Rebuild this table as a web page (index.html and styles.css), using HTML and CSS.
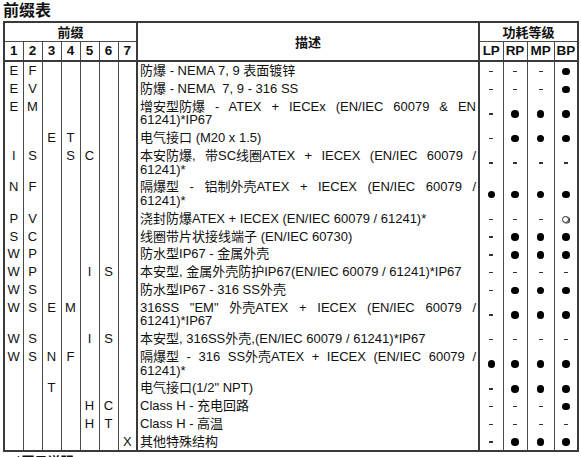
FILE: index.html
```html
<!DOCTYPE html>
<html lang="zh">
<head>
<meta charset="utf-8">
<title>前缀表</title>
<link rel="stylesheet" href="styles.css">
</head>
<body>
<div class="page">
  <h1 class="title">前缀表</h1>
  <table class="ptable">
    <colgroup>
      <col class="c-p"><col class="c-p"><col class="c-p"><col class="c-p"><col class="c-p"><col class="c-p"><col class="c-p">
      <col class="c-d">
      <col class="c-m"><col class="c-m"><col class="c-m3"><col class="c-m">
    </colgroup>
    <thead>
      <tr class="h1">
        <th colspan="7" class="grp sep-r">前缀</th>
        <th rowspan="2" class="desc-h sep-r">描述</th>
        <th colspan="4" class="grp">功耗等级</th>
      </tr>
      <tr class="h2">
        <th>1</th><th>2</th><th>3</th><th>4</th><th>5</th><th>6</th><th class="sep-r">7</th>
        <th>LP</th><th>RP</th><th>MP</th><th>BP</th>
      </tr>
    </thead>
    <tbody>
      <tr><td class="p">E</td><td class="p">F</td><td class="p"></td><td class="p"></td><td class="p"></td><td class="p"></td><td class="p sep-r"></td>
        <td class="d sep-r">防爆 - NEMA 7, 9 表面镀锌</td>
        <td class="m"><i class="dash"></i></td><td class="m"><i class="dash"></i></td><td class="m"><i class="dash"></i></td><td class="m"><i class="dot"></i></td></tr>
      <tr><td class="p">E</td><td class="p">V</td><td class="p"></td><td class="p"></td><td class="p"></td><td class="p"></td><td class="p sep-r"></td>
        <td class="d sep-r">防爆 - NEMA&nbsp; 7, 9 - 316 SS</td>
        <td class="m"><i class="dash"></i></td><td class="m"><i class="dash"></i></td><td class="m"><i class="dash"></i></td><td class="m"><i class="dot"></i></td></tr>
      <tr><td class="p">E</td><td class="p">M</td><td class="p"></td><td class="p"></td><td class="p"></td><td class="p"></td><td class="p sep-r"></td>
        <td class="d sep-r"><span class="jl"><span class="w">增安型防爆</span> - ATEX + IECEx (EN/IEC 60079 &amp; EN</span><span class="ln">61241)*IP67</span></td>
        <td class="m"><i class="dash"></i></td><td class="m"><i class="dot"></i></td><td class="m"><i class="dot"></i></td><td class="m"><i class="dot"></i></td></tr>
      <tr><td class="p"></td><td class="p"></td><td class="p">E</td><td class="p">T</td><td class="p"></td><td class="p"></td><td class="p sep-r"></td>
        <td class="d sep-r">电气接口 (M20 x 1.5)</td>
        <td class="m"><i class="dash"></i></td><td class="m"><i class="dot"></i></td><td class="m"><i class="dot"></i></td><td class="m"><i class="dot"></i></td></tr>
      <tr><td class="p">I</td><td class="p">S</td><td class="p"></td><td class="p">S</td><td class="p">C</td><td class="p"></td><td class="p sep-r"></td>
        <td class="d sep-r"><span class="jl"><span class="w">本安防爆,</span> <span class="w">带SC线圈ATEX</span> + IECEX (EN/IEC 60079 /</span><span class="ln">61241)*</span></td>
        <td class="m"><i class="dash"></i></td><td class="m"><i class="dash"></i></td><td class="m"><i class="dash"></i></td><td class="m"><i class="dash"></i></td></tr>
      <tr><td class="p">N</td><td class="p">F</td><td class="p"></td><td class="p"></td><td class="p"></td><td class="p"></td><td class="p sep-r"></td>
        <td class="d sep-r"><span class="jl"><span class="w">隔爆型</span> - <span class="w">铝制外壳ATEX</span> + IECEX (EN/IEC 60079 /</span><span class="ln">61241)*</span></td>
        <td class="m"><i class="dot"></i></td><td class="m"><i class="dot"></i></td><td class="m"><i class="dot"></i></td><td class="m"><i class="dot"></i></td></tr>
      <tr><td class="p">P</td><td class="p">V</td><td class="p"></td><td class="p"></td><td class="p"></td><td class="p"></td><td class="p sep-r"></td>
        <td class="d sep-r">浇封防爆ATEX + IECEX (EN/IEC 60079 / 61241)*</td>
        <td class="m"><i class="dash"></i></td><td class="m"><i class="dash"></i></td><td class="m"><i class="dash"></i></td><td class="m"><i class="ring"></i></td></tr>
      <tr><td class="p">S</td><td class="p">C</td><td class="p"></td><td class="p"></td><td class="p"></td><td class="p"></td><td class="p sep-r"></td>
        <td class="d sep-r">线圈带片状接线端子 (EN/IEC 60730)</td>
        <td class="m"><i class="dash"></i></td><td class="m"><i class="dot"></i></td><td class="m"><i class="dot"></i></td><td class="m"><i class="dot"></i></td></tr>
      <tr><td class="p">W</td><td class="p">P</td><td class="p"></td><td class="p"></td><td class="p"></td><td class="p"></td><td class="p sep-r"></td>
        <td class="d sep-r">防水型IP67 - 金属外壳</td>
        <td class="m"><i class="dash"></i></td><td class="m"><i class="dot"></i></td><td class="m"><i class="dot"></i></td><td class="m"><i class="dot"></i></td></tr>
      <tr><td class="p">W</td><td class="p">P</td><td class="p"></td><td class="p"></td><td class="p">I</td><td class="p">S</td><td class="p sep-r"></td>
        <td class="d sep-r">本安型, 金属外壳防护IP67(EN/IEC 60079 / 61241)*IP67</td>
        <td class="m"><i class="dash"></i></td><td class="m"><i class="dash"></i></td><td class="m"><i class="dash"></i></td><td class="m"><i class="dash"></i></td></tr>
      <tr><td class="p">W</td><td class="p">S</td><td class="p"></td><td class="p"></td><td class="p"></td><td class="p"></td><td class="p sep-r"></td>
        <td class="d sep-r">防水型IP67 - 316 SS外壳</td>
        <td class="m"><i class="dash"></i></td><td class="m"><i class="dot"></i></td><td class="m"><i class="dot"></i></td><td class="m"><i class="dot"></i></td></tr>
      <tr><td class="p">W</td><td class="p">S</td><td class="p">E</td><td class="p">M</td><td class="p"></td><td class="p"></td><td class="p sep-r"></td>
        <td class="d sep-r"><span class="jl">316SS "EM" <span class="w">外壳ATEX</span> + IECEX (EN/IEC 60079 /</span><span class="ln">61241)*IP67</span></td>
        <td class="m"><i class="dash"></i></td><td class="m"><i class="dot"></i></td><td class="m"><i class="dot"></i></td><td class="m"><i class="dot"></i></td></tr>
      <tr><td class="p">W</td><td class="p">S</td><td class="p"></td><td class="p"></td><td class="p">I</td><td class="p">S</td><td class="p sep-r"></td>
        <td class="d sep-r">本安型, 316SS外壳,(EN/IEC 60079 / 61241)*IP67</td>
        <td class="m"><i class="dash"></i></td><td class="m"><i class="dash"></i></td><td class="m"><i class="dash"></i></td><td class="m"><i class="dash"></i></td></tr>
      <tr><td class="p">W</td><td class="p">S</td><td class="p">N</td><td class="p">F</td><td class="p"></td><td class="p"></td><td class="p sep-r"></td>
        <td class="d sep-r"><span class="jl"><span class="w">隔爆型</span> - 316 <span class="w">SS外壳ATEX</span> + IECEX (EN/IEC 60079 /</span><span class="ln">61241)*</span></td>
        <td class="m"><i class="dot"></i></td><td class="m"><i class="dot"></i></td><td class="m"><i class="dot"></i></td><td class="m"><i class="dot"></i></td></tr>
      <tr><td class="p"></td><td class="p"></td><td class="p">T</td><td class="p"></td><td class="p"></td><td class="p"></td><td class="p sep-r"></td>
        <td class="d sep-r">电气接口(1/2" NPT)</td>
        <td class="m"><i class="dash"></i></td><td class="m"><i class="dot"></i></td><td class="m"><i class="dot"></i></td><td class="m"><i class="dot"></i></td></tr>
      <tr><td class="p"></td><td class="p"></td><td class="p"></td><td class="p"></td><td class="p">H</td><td class="p">C</td><td class="p sep-r"></td>
        <td class="d sep-r">Class H - 充电回路</td>
        <td class="m"><i class="dash"></i></td><td class="m"><i class="dash"></i></td><td class="m"><i class="dash"></i></td><td class="m"><i class="dot"></i></td></tr>
      <tr><td class="p"></td><td class="p"></td><td class="p"></td><td class="p"></td><td class="p">H</td><td class="p">T</td><td class="p sep-r"></td>
        <td class="d sep-r">Class H - 高温</td>
        <td class="m"><i class="dash"></i></td><td class="m"><i class="dash"></i></td><td class="m"><i class="dash"></i></td><td class="m"><i class="dash"></i></td></tr>
      <tr><td class="p"></td><td class="p"></td><td class="p"></td><td class="p"></td><td class="p"></td><td class="p"></td><td class="p sep-r">X</td>
        <td class="d sep-r">其他特殊结构</td>
        <td class="m"><i class="dash"></i></td><td class="m"><i class="dot"></i></td><td class="m"><i class="dot"></i></td><td class="m"><i class="dot"></i></td></tr>
    </tbody>
  </table>
  <p class="note">*图示说明</p>
</div>
</body>
</html>
```

FILE: styles.css
```css
html, body {
  margin: 0;
  padding: 0;
  background: #ffffff;
}

body {
  font-family: "Liberation Sans", "Noto Sans CJK SC", sans-serif;
  color: #111111;
}

.page {
  padding: 0 3px;
}

.title {
  margin: 0;
  padding: 0;
  font-family: "Noto Sans CJK SC", sans-serif;
  font-size: 16px;
  font-weight: 700;
  line-height: 18px;
  height: 21px;
}

.ptable {
  border-collapse: collapse;
  table-layout: fixed;
  width: 575px;
  border: 2px solid #3a3a3a;
  font-size: 13px;
}

.c-p { width: 19px; }
.c-d { width: 342px; }
.c-m { width: 24px; }
.c-m3 { width: 27px; }

.ptable th {
  font-weight: 700;
  font-size: 13.5px;
  line-height: 14px;
  padding: 2px 0;
  text-align: center;
  border: 1px solid #4a4a4a;
  color: #111;
}

.ptable thead .h1 th {
  height: 14px;
  font-family: "Noto Sans CJK SC", sans-serif;
  font-size: 13px;
}

.ptable thead .h2 th {
  border-bottom: 2px solid #3a3a3a;
}

.ptable th.desc-h {
  font-family: "Noto Sans CJK SC", sans-serif;
  font-size: 13px;
  border-bottom: 2px solid #3a3a3a;
}

.ptable td {
  padding: 2px 0;
  line-height: 13.75px;
  border-left: 1px solid #4a4a4a;
  border-right: 1px solid #4a4a4a;
  border-top: 0;
  border-bottom: 0;
}

.ptable .sep-r {
  border-right: 2px solid #3a3a3a;
}

.ptable td.p {
  text-align: center;
  vertical-align: top;
}

.ptable td.d {
  padding-left: 2px;
  padding-right: 2px;
  vertical-align: top;
}

.jl {
  display: block;
  text-align: justify;
  text-align-last: justify;
}

.w {
  display: inline-block;
  white-space: nowrap;
}

.ln {
  display: block;
}

.ptable td.m {
  text-align: center;
  vertical-align: middle;
  padding: 0;
}

.dot {
  display: inline-block;
  width: 7.5px;
  height: 7.5px;
  border-radius: 50%;
  background: #000;
  vertical-align: middle;
}

.dash {
  display: inline-block;
  width: 4px;
  height: 1.5px;
  background: #333;
  vertical-align: middle;
}

.ring {
  display: inline-block;
  width: 5px;
  height: 5px;
  border-radius: 50%;
  border: 1px solid #222;
  box-shadow: 1px 0.5px 0 #222;
  vertical-align: middle;
}

.note {
  margin: 1px 0 0 12px;
  font-family: "Noto Sans CJK SC", sans-serif;
  font-size: 13px;
  font-weight: 700;
  line-height: 16px;
}
```
